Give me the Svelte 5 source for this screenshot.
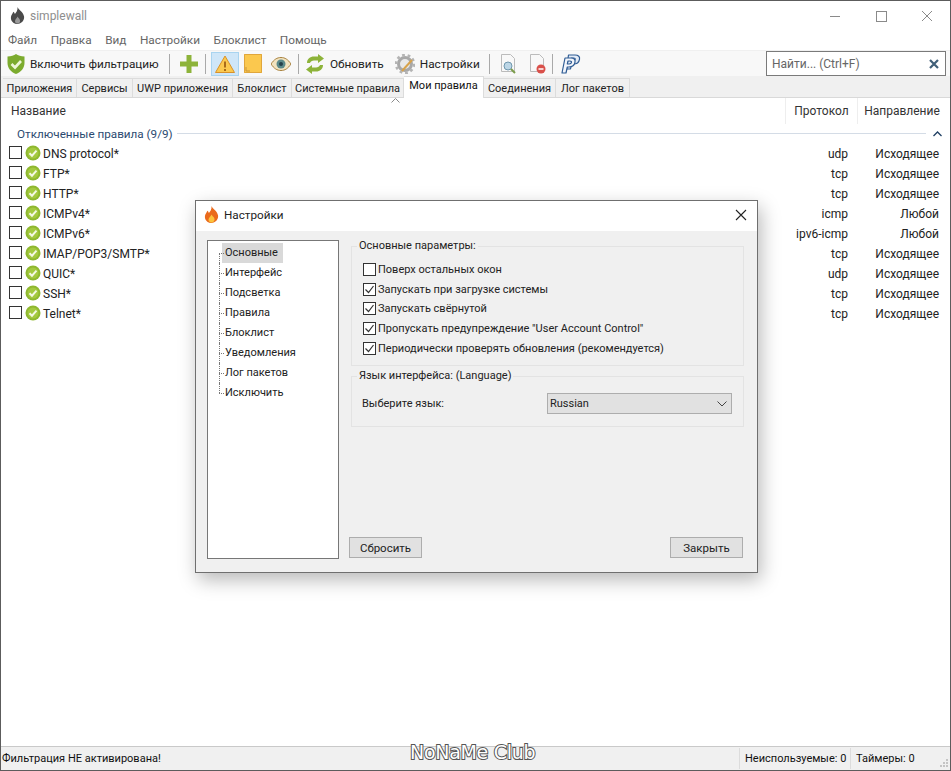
<script>
	const menu = ['Файл', 'Правка', 'Вид', 'Настройки', 'Блоклист', 'Помощь'];
	const tabs = [
		{ label: 'Приложения', w: 74 },
		{ label: 'Сервисы', w: 56 },
		{ label: 'UWP приложения', w: 100 },
		{ label: 'Блоклист', w: 59 },
		{ label: 'Системные правила', w: 112 },
		{ label: 'Мои правила', w: 80, active: true },
		{ label: 'Соединения', w: 72 },
		{ label: 'Лог пакетов', w: 74 }
	];
	const rules = [
		['DNS protocol*', 'udp', 'Исходящее'],
		['FTP*', 'tcp', 'Исходящее'],
		['HTTP*', 'tcp', 'Исходящее'],
		['ICMPv4*', 'icmp', 'Любой'],
		['ICMPv6*', 'ipv6-icmp', 'Любой'],
		['IMAP/POP3/SMTP*', 'tcp', 'Исходящее'],
		['QUIC*', 'udp', 'Исходящее'],
		['SSH*', 'tcp', 'Исходящее'],
		['Telnet*', 'tcp', 'Исходящее']
	];
	const pages = ['Основные', 'Интерфейс', 'Подсветка', 'Правила', 'Блоклист', 'Уведомления', 'Лог пакетов', 'Исключить'];
	const options = [
		['Поверх остальных окон', false],
		['Запускать при загрузке системы', true],
		['Запускать свёрнутой', true],
		['Пропускать предупреждение "User Account Control"', true],
		['Периодически проверять обновления (рекомендуется)', true]
	];
</script>

<div class="window">
	<header class="titlebar">
		<svg class="app-icon" viewBox="0 0 16 18" width="15" height="17">
			<path d="M8 0c1 3 6 5 7 10 .6 4-3 8-7 8s-7.500-3-7-7.500C1.300 8 3 7 3.500 5c1 .5 1.500 1.500 1.700 2.500C6.500 6 8.500 3.500 8 0z" fill="#4a4a4a" />
			<path d="M8 10c.5 1.500 3 2.500 2.800 5-.2 1.500-1.500 2.500-2.800 2.500S5.300 16.500 5.300 15C5.300 13 7.500 12 8 10z" fill="#9a9a9a" />
		</svg>
		<span class="app-name">simplewall</span>
		<div class="caption">
			<svg viewBox="0 0 46 30" width="46" height="30"><path d="M18 15.500h10" stroke="#8a8a8a" /></svg>
			<svg viewBox="0 0 46 30" width="46" height="30"><rect x="18.500" y="10.500" width="10" height="10" fill="none" stroke="#8a8a8a" /></svg>
			<svg viewBox="0 0 46 30" width="46" height="30"><path d="M18 10l10 10M28 10L18 20" stroke="#8a8a8a" /></svg>
		</div>
	</header>

	<nav class="menu">
		{#each menu as item}
			<span>{item}</span>
		{/each}
	</nav>

	<div class="toolbar">
		<svg class="shield" viewBox="0 0 18 20" width="18" height="20">
			<path d="M9 0c2 1.500 5 2.500 8.500 2.500V9c0 5-3.500 9-8.500 11C4 18 .5 14 .5 9V2.500C4 2.500 7 1.500 9 0z" fill="#7cab2e" />
			<path d="M4.500 10l3.500 3.500 6-6.500" fill="none" stroke="#eef6d8" stroke-width="2.600" />
		</svg>
		<span class="tool-label first">Включить фильтрацию</span>
		<i class="sep s1"></i>
		<svg class="plus" viewBox="0 0 18 18" width="18" height="18">
			<path d="M6.500 0h5v6.500H18v5h-6.500V18h-5v-6.500H0v-5h6.500z" fill="#8db33a" />
		</svg>
		<i class="sep s2"></i>
		<div class="pressed">
			<svg viewBox="0 0 20 18" width="20" height="18">
				<path d="M10 1L19.500 17.500H.5z" fill="#fbc94f" stroke="#d9922a" stroke-linejoin="round" />
				<path d="M10 6.500v6M10 14v2" stroke="#9b5b12" stroke-width="1.700" />
			</svg>
		</div>
		<svg class="note" viewBox="0 0 18 19" width="18" height="19">
			<path d="M0 0h18v19H0z" fill="#fbc84e" />
			<path d="M.5.500h17v18H.5z" fill="none" stroke="#e0a63c" />
			<path d="M2 13v4h4" fill="none" stroke="#c9953a" />
		</svg>
		<svg class="eye" viewBox="0 0 20 14" width="20" height="14">
			<path d="M0 7c3-4.500 6-6.500 10-6.500S17 2.500 20 7c-3 4.500-6 6.500-10 6.500S3 11.500 0 7z" fill="#f2e3c0" stroke="#a8823f" />
			<circle cx="10" cy="7" r="4.500" fill="#5c8a8a" />
			<circle cx="10" cy="7" r="2" fill="#24404a" />
		</svg>
		<i class="sep s3"></i>
		<svg class="refresh" viewBox="0 0 20 20" width="20" height="20">
			<path d="M2 9c0-4 3-6.500 7-6.500h4V0l6 4.500L13 9V6.500H9C7 6.500 5.500 7.500 5 9z" fill="#8db33a" />
			<path d="M18 11c0 4-3 6.500-7 6.500H7V20l-6-4.500L7 11v2.500h4c2 0 3.500-1 4-2.500z" fill="#8db33a" />
		</svg>
		<span class="tool-label">Обновить</span>
		<svg class="gear" viewBox="0 0 20 20" width="20" height="20">
			<circle cx="10" cy="10" r="6.500" fill="#e8e8e8" stroke="#a8a8a8" stroke-width="3" />
			<circle cx="10" cy="10" r="9" fill="none" stroke="#b4b4b4" stroke-width="2.500" stroke-dasharray="2.800 2.800" />
			<path d="M7 17L17 6" stroke="#d7a24a" stroke-width="2" />
		</svg>
		<span class="tool-label">Настройки</span>
		<i class="sep s4"></i>
		<svg class="doc" viewBox="0 0 20 20" width="20" height="20">
			<path d="M3.500.5h9l4 4v13h-13z" fill="#f8f8f8" stroke="#bbb" />
			<circle cx="10" cy="12" r="4" fill="#bcd6e6" stroke="#6f97ad" />
			<path d="M13 15l4 4" stroke="#7b9c4a" stroke-width="2" />
		</svg>
		<svg class="doc" viewBox="0 0 20 20" width="20" height="20">
			<path d="M3.500.5h9l4 4v13h-13z" fill="#f8f8f8" stroke="#bbb" />
			<circle cx="14" cy="15" r="4.500" fill="#d9504a" />
			<path d="M11.500 15h5" stroke="#fff" stroke-width="1.500" />
		</svg>
		<i class="sep s5"></i>
		<svg class="paypal" viewBox="0 0 20 20" width="20" height="20">
			<path d="M7.500 1h6.500c3.500 0 5 1.800 4.500 4.300-.6 3-3 4.700-6 4.700h-2L9.500 15H5.500zM10.500 4l-.7 3h2c1.300 0 2.200-.6 2.400-1.600.2-.9-.4-1.400-1.500-1.400z" fill="#e3ebf6" fill-rule="evenodd" stroke="#2f5c94" stroke-width="1.200" stroke-linejoin="round" />
			<path d="M4 4h6c3 0 4.500 1.700 4 4.200-.6 3-3 4.800-6 4.800H6.300L5 19H1zM7 7l-.7 3h1.800c1.300 0 2.200-.6 2.400-1.600.2-.9-.4-1.400-1.500-1.400z" fill="#f2f5fb" fill-rule="evenodd" stroke="#2f5c94" stroke-width="1.200" stroke-linejoin="round" />
		</svg>
		<div class="search">
			<span>Найти... (Ctrl+F)</span>
			<svg viewBox="0 0 10 10" width="10" height="10"><path d="M1 1l8 8M9 1L1 9" stroke="#3f5f78" stroke-width="2.200" /></svg>
		</div>
	</div>

	<div class="tabs">
		{#each tabs as tab}
			<div class="tab" class:active={tab.active} style="width: {tab.w}px">{tab.label}</div>
		{/each}
	</div>

	<main class="list">
		<div class="row head">
			<span class="name">Название</span>
			<svg class="sort" viewBox="0 0 9 5" width="9" height="5"><path d="M.5 4.500l4-4 4 4" fill="none" stroke="#8a8a8a" /></svg>
			<span class="proto">Протокол</span>
			<span class="dir">Направление</span>
		</div>
		<div class="group">
			<span>Отключенные правила (9/9)</span>
			<i></i>
			<svg viewBox="0 0 9 6" width="9" height="6"><path d="M.5 5l4-4 4 4" fill="none" stroke="#1f3f63" stroke-width="1.300" /></svg>
		</div>
		{#each rules as [name, proto, dir]}
			<div class="row rule">
				<span class="name">
					<b class="box"></b>
					<svg viewBox="0 0 16 16" width="16" height="16">
						<circle cx="8" cy="8" r="7.500" fill="#8fb82f" />
						<circle cx="8" cy="8" r="5.500" fill="#a4c93f" />
						<path d="M4.500 8.200l2.500 2.500 4.500-5" fill="none" stroke="#f4f8e4" stroke-width="2" />
					</svg>
					{name}
				</span>
				<span class="proto">{proto}</span>
				<span class="dir">{dir}</span>
			</div>
		{/each}
	</main>

	<footer class="status">
		<span class="state">Фильтрация НЕ активирована!</span>
		<span class="cell unused">Неиспользуемые: 0</span>
		<span class="cell timers">Таймеры: 0</span>
		<svg class="grip" viewBox="0 0 10 10" width="10" height="10">
			<path d="M7 1h2v2H7zM4 4h2v2H4zM7 4h2v2H7zM1 7h2v2H1zM4 7h2v2H4zM7 7h2v2H7z" fill="#c4c4c4" />
		</svg>
	</footer>

	<div class="mark">NoNaMe Club</div>

	<section class="dialog">
		<header class="dialog-title">
			<svg viewBox="0 0 16 18" width="15" height="17">
				<path d="M8 0c1 3 6 5 7 10 .6 4-3 8-7 8s-7.500-3-7-7.500C1.300 8 3 7 3.500 5c1 .5 1.500 1.500 1.700 2.500C6.500 6 8.500 3.500 8 0z" fill="#ea6a1c" />
				<path d="M8 9c.5 1.500 3.500 3 3.200 5.500-.2 2-1.700 3-3.200 3s-3.200-1-3.200-3C4.800 12 7.500 11 8 9z" fill="#fcc23c" />
			</svg>
			<span>Настройки</span>
			<svg class="close" viewBox="0 0 12 12" width="12" height="12"><path d="M1 1l10 10M11 1L1 11" stroke="#222" stroke-width="1.100" /></svg>
		</header>
		<div class="dialog-body">
			<ul class="tree">
				{#each pages as page, i}
					<li><span class:selected={i === 0}>{page}</span></li>
				{/each}
			</ul>
			<div class="pane">
				<fieldset class="params">
					<legend>Основные параметры:</legend>
					{#each options as [label, on]}
						<div class="option">
							<b class="box">
								{#if on}
									<svg viewBox="0 0 11 11" width="11" height="11"><path d="M1.500 5.500l3 3 5-6.500" fill="none" stroke="#333" stroke-width="1.200" /></svg>
								{/if}
							</b>
							{label}
						</div>
					{/each}
				</fieldset>
				<fieldset class="lang">
					<legend>Язык интерфейса: (Language)</legend>
					<div class="lang-row">
						<span>Выберите язык:</span>
						<div class="select">
							Russian
							<svg viewBox="0 0 10 6" width="10" height="6"><path d="M.5.500L5 5 9.500.500" fill="none" stroke="#444" /></svg>
						</div>
					</div>
				</fieldset>
				<div class="actions">
					<button>Сбросить</button>
					<button>Закрыть</button>
				</div>
			</div>
		</div>
	</section>
</div>

<style>
	:global(body) {
		margin: 0;
		background: #fff;
		font-family: Roboto, 'Open Sans', sans-serif;
		font-size: 12px;
		color: #222;
	}

	.window {
		position: relative;
		box-sizing: border-box;
		height: 771px;
		display: flex;
		flex-direction: column;
		overflow: hidden;
		border: 1px solid #5c5c5c;
		background: #fff;
	}

	.titlebar {
		flex: none;
		height: 29px;
		display: flex;
		align-items: center;
		padding-left: 9px;
	}

	.app-name {
		margin-left: 5px;
		color: #8e8e8e;
	}

	.caption {
		margin-left: auto;
		display: flex;
		align-self: flex-start;
	}

	.caption svg {
		display: block;
	}

	.menu {
		flex: none;
		height: 20px;
		display: flex;
		gap: 13.5px;
		align-items: center;
		padding-left: 7px;
		font-size: 11.8px;
		color: #666;
	}

	.toolbar {
		flex: none;
		height: 26px;
		display: flex;
		align-items: center;
		padding-left: 6px;
		background: #f8f8f8;
		border-top: 1px solid #f0f0f0;
		box-sizing: border-box;
	}

	.tool-label {
		margin-left: 5px;
		font-size: 11.8px;
		white-space: nowrap;
	}

	.first {
		width: 129px;
	}

	.sep {
		width: 1px;
		height: 20px;
		background: #a9a9a9;
		flex: none;
	}

	.s1 { margin: 0 10px 0 10px; }
	.s2 { margin: 0 5px 0 7px; }
	.s3 { margin: 0 6px 0 7px; }
	.s4 { margin: 0 8px 0 9px; }
	.s5 { margin: 0 8px 0 5px; }

	.pressed {
		width: 28px;
		height: 24px;
		box-sizing: border-box;
		border: 1px solid #a9d4f0;
		background: #cfe6f8;
		display: flex;
		align-items: center;
		justify-content: center;
	}

	.note { margin-left: 5px; }
	.eye { margin-left: 9px; }
	.gear { margin-left: 11px; }
	.doc + .doc { margin-left: 9px; }

	.search {
		margin-left: auto;
		margin-right: 4px;
		width: 180px;
		height: 25px;
		box-sizing: border-box;
		border: 1px solid #7a7a7a;
		background: #fff;
		padding: 0 6px 0 5px;
		display: flex;
		align-items: center;
		justify-content: space-between;
		color: #666;
	}

	.tabs {
		flex: none;
		height: 21px;
		display: flex;
		align-items: flex-end;
		padding-left: 2px;
		background: #f0f0f0;
		border-bottom: 1px solid #d9d9d9;
		font-size: 11px;
	}

	.tab {
		height: 19px;
		box-sizing: border-box;
		border: 1px solid #dcdcdc;
		border-bottom: 0;
		border-left: 0;
		text-align: center;
		line-height: 20px;
		white-space: nowrap;
		background: #f0f0f0;
	}

	.tab.active {
		height: 22px;
		margin-bottom: -1px;
		line-height: 18px;
		background: #fff;
		color: #111;
	}

	.list {
		flex: 1;
		min-height: 0;
		display: flex;
		flex-direction: column;
		position: relative;
	}

	.row {
		display: grid;
		grid-template-columns: 784px 72px 1fr;
		height: 20px;
		align-items: center;
		flex: none;
	}

	.head {
		height: 26px;
		position: relative;
	}

	.head span {
		color: #333;
		line-height: 26px;
	}

	.head .name { padding-left: 10px; }
	.head .proto { text-align: center; border-left: 1px solid #eee; }
	.head .dir { text-align: center; border-left: 1px solid #eee; padding-right: 4px; }

	.sort {
		position: absolute;
		left: 390px;
		top: 0;
	}

	.group {
		flex: none;
		height: 19px;
		display: flex;
		align-items: center;
		padding-left: 16px;
		font-size: 11.7px;
		color: #2b4a70;
	}

	.group i {
		flex: 1;
		height: 1px;
		margin: 0 3px 0 4px;
		background: #d4dce6;
	}

	.group svg {
		margin: 0 8px 0 4px;
	}

	.name {
		display: flex;
		align-items: center;
		white-space: nowrap;
	}

	.rule {
		box-sizing: border-box;
		padding-top: 1px;
	}

	.rule .name {
		padding-left: 8px;
	}

	.rule .box,
	.rule .name svg {
		margin-top: -2px;
	}

	.rule .name svg {
		margin-left: 3px;
		margin-right: 2px;
	}

	.rule .proto {
		text-align: right;
		padding-right: 9px;
	}

	.rule .dir {
		text-align: right;
		padding-right: 11px;
	}

	.box {
		display: flex;
		align-items: center;
		justify-content: center;
		flex: none;
		width: 13px;
		height: 13px;
		box-sizing: border-box;
		border: 1px solid #333;
		background: #fff;
	}

	.status {
		flex: none;
		height: 24px;
		position: relative;
		display: flex;
		align-items: center;
		background: #f0f0f0;
		border-top: 1px solid #c9c9c9;
		box-sizing: border-box;
		padding-left: 1px;
		font-size: 11px;
		color: #111;
	}

	.state {
		flex: 1;
	}

	.cell {
		box-sizing: border-box;
		border-left: 1px solid #dcdcdc;
		height: 21px;
		line-height: 21px;
		padding-left: 5px;
		white-space: nowrap;
	}

	.unused { width: 111px; }
	.timers { width: 71px; }

	.grip {
		margin: 8px 1px 0 18px;
	}

	.mark {
		position: absolute;
		left: 409px;
		bottom: 8px;
		font-family: 'DejaVu Sans', sans-serif;
		font-size: 19px;
		line-height: 20px;
		letter-spacing: -0.3px;
		color: #fff;
		-webkit-text-stroke: 2px #555;
		paint-order: stroke fill;
		white-space: nowrap;
	}

	.dialog {
		position: absolute;
		left: 194px;
		top: 199px;
		width: 563px;
		height: 373px;
		box-sizing: border-box;
		border: 1px solid #6f6f6f;
		background: #f0f0f0;
		box-shadow: 3px 7px 18px rgba(0, 0, 0, 0.28);
		display: flex;
		flex-direction: column;
	}

	.dialog-title {
		flex: none;
		height: 30px;
		box-sizing: border-box;
		padding: 0 10px 3px 8px;
		background: #fff;
		display: flex;
		align-items: center;
		gap: 5px;
		font-size: 11.7px;
	}

	.close {
		margin-left: auto;
	}

	.dialog-body {
		flex: 1;
		display: flex;
		padding: 9px 13px 13px 11px;
		gap: 10px;
		min-height: 0;
		font-size: 11px;
	}

	.tree {
		flex: none;
		width: 132px;
		box-sizing: border-box;
		margin: 0;
		padding: 2px 0 0 14px;
		list-style: none;
		background: #fff;
		border: 1px solid #777;
	}

	.tree li {
		position: relative;
		height: 20px;
		display: flex;
		align-items: center;
	}

	.tree li::before {
		content: '';
		position: absolute;
		left: -3px;
		top: 10px;
		width: 5px;
		border-top: 1px dotted #777;
	}

	.tree li::after {
		content: '';
		position: absolute;
		left: -3px;
		top: 0;
		height: 20px;
		border-left: 1px dotted #777;
	}

	.tree li:first-child::after {
		top: 10px;
		height: 10px;
	}

	.tree li:last-child::after {
		height: 10px;
	}

	.tree span {
		padding: 0 5px 0 3px;
		line-height: 20px;
	}

	.tree span.selected {
		background: #d9d9d9;
	}

	.pane {
		flex: 1;
		display: flex;
		flex-direction: column;
		min-width: 0;
		margin-left: 2px;
	}

	fieldset {
		margin: 0;
		padding: 0;
		box-sizing: border-box;
		border: 1px solid #e3e3e3;
		min-width: 0;
	}

	legend {
		padding: 0 2px;
		margin-left: 5px;
		line-height: 14px;
	}

	.params {
		height: 127px;
		margin-top: -1px;
		padding-top: 7px;
	}

	.option {
		display: flex;
		align-items: center;
		height: 19.6px;
		margin-left: 11px;
		gap: 2px;
	}

	.lang {
		height: 58px;
		margin-top: 3px;
		padding-top: 10px;
	}

	.lang-row {
		display: flex;
		align-items: center;
		justify-content: space-between;
		margin: 0 11px 0 10px;
	}

	.select {
		width: 185px;
		height: 21px;
		box-sizing: border-box;
		border: 1px solid #adadad;
		background: #e1e1e1;
		display: flex;
		align-items: center;
		justify-content: space-between;
		padding: 0 4px 0 2px;
	}

	.actions {
		margin-top: auto;
		margin-bottom: 1px;
		margin-left: -2px;
		padding-right: 1px;
		display: flex;
		justify-content: space-between;
	}

	button {
		width: 73px;
		height: 21px;
		padding: 0;
		box-sizing: border-box;
		border: 1px solid #adadad;
		background: #e1e1e1;
		font: inherit;
		font-size: 11.5px;
		color: #222;
	}
</style>
